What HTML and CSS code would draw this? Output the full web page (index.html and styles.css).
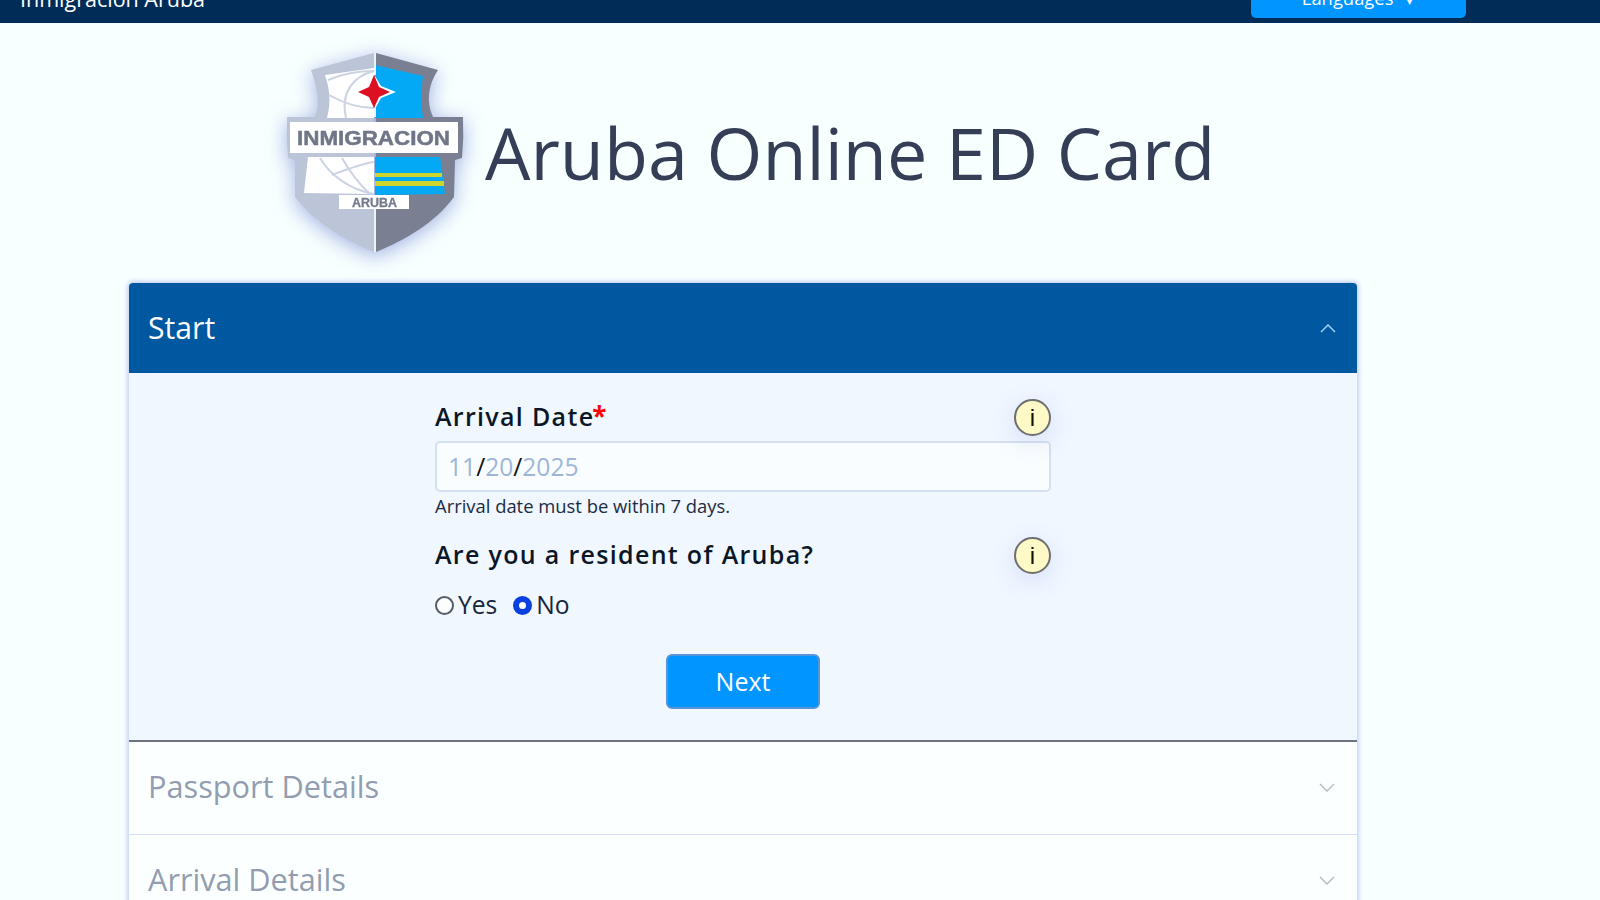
FILE: index.html
```html
<!DOCTYPE html>
<html lang="en">
<head>
    <meta charset="UTF-8">
    <meta name="viewport" content="width=device-width, initial-scale=1.0">
    <title>Aruba Online ED Card</title>
    <link rel="stylesheet" href="styles.css">
</head>
<body>
    <header class="topbar">
        <span class="brand">Inmigración Aruba</span>
        <button type="button" class="lang-btn">Languages <span class="lang-caret">▾</span></button>
    </header>

    <main class="page">
        <div class="title-row">
            <svg class="logo" viewBox="0 0 210 230" width="210" height="230">
                <path d="M104 13 L41 30 C48 50 50 65 45 77 L17 77 Q16 98 18 118 L25 120 L25 157 C45 183 75 200 104 212 Z" fill="#bcc5d8"/>
                <path d="M106 13 L168 30 C158 45 156 62 163 77 L193 77 Q194 98 192 118 L185 120 L184 157 C165 183 135 200 106 212 Z" fill="#7a8091"/>
                <path d="M55 35 L104 28 L104 78 L57 78 C61 62 60 50 55 35 Z" fill="#fff"/>
                <path d="M38 117 L104 117 L104 154 L34 153 Z" fill="#fff"/>
                <path d="M105 25 L153 36 C151 50 151 65 153 78 L105 78 Z" fill="#03a9f4"/>
                <path d="M105 117 L170 117 L175 154 L105 155 Z" fill="#03a9f4"/>
                <rect x="105" y="133" width="67" height="4" fill="#cdd52c"/>
                <rect x="105" y="141" width="69" height="5" fill="#cdd52c"/>
                <g fill="none" stroke="#ccd3e2" stroke-width="2">
                    <path d="M104 31 C84 36 70 52 76 78"/>
                    <path d="M59 55 C75 64 90 68 104 68"/>
                    <path d="M58 40 C72 34 88 31 104 31"/>
                    <path d="M50 118 C60 135 80 150 104 154"/>
                    <path d="M62 135 C75 130 90 124 104 122"/>
                    <path d="M72 118 C80 132 90 145 100 154"/>
                </g>
                <path d="M105 36 L111 46 L126 52 L111 58 L105 69 Z" fill="#fff"/>
                <path d="M104 35 L109 47 L120 52 L109 57 L104 68 L99 57 L88 52 L99 47 Z" fill="#dc0f23"/>
                <rect x="20" y="82" width="168" height="31" fill="#fff"/>
                <rect x="69" y="155" width="70" height="14" fill="#fff"/>
                <text class="logo-main" x="27" y="105" textLength="153" lengthAdjust="spacingAndGlyphs">INMIGRACION</text>
                <text class="logo-sub" x="82" y="167" textLength="45" lengthAdjust="spacingAndGlyphs">ARUBA</text>
                <rect x="104" y="13" width="2" height="22" fill="#eef1f6"/>
                <rect x="104" y="68" width="2" height="9" fill="#eef1f6"/>
                <rect x="104" y="169" width="2" height="43" fill="#eef1f6"/>
            </svg>
            <h1 class="page-title">Aruba Online ED Card</h1>
        </div>

        <section class="accordion">
            <div class="acc-head active">
                <span>Start</span>
                <svg class="chevron" viewBox="0 0 16 9" width="16" height="9"><path d="M1 8 L8 1 L15 8"/></svg>
            </div>
            <div class="acc-body">
                <form class="start-form" onsubmit="return false">
                    <div class="label-row">
                        <label class="field-label">Arrival Date<span class="req">*</span></label>
                        <span class="info">i</span>
                    </div>
                    <div class="date-input">
                        <span class="seg">11</span>/<span class="seg">20</span>/<span class="seg">2025</span>
                    </div>
                    <p class="help">Arrival date must be within 7 days.</p>

                    <div class="label-row second">
                        <label class="field-label">Are you a resident of Aruba?</label>
                        <span class="info">i</span>
                    </div>
                    <div class="radios">
                        <label class="radio"><input type="radio" name="resident">Yes</label>
                        <label class="radio"><input type="radio" name="resident" checked>No</label>
                    </div>
                    <div class="actions">
                        <button type="submit" class="next-btn">Next</button>
                    </div>
                </form>
            </div>
            <div class="acc-head closed">
                <span>Passport Details</span>
                <svg class="chevron" viewBox="0 0 16 9" width="16" height="9"><path d="M1 1 L8 8 L15 1"/></svg>
            </div>
            <div class="acc-head closed">
                <span>Arrival Details</span>
                <svg class="chevron" viewBox="0 0 16 9" width="16" height="9"><path d="M1 1 L8 8 L15 1"/></svg>
            </div>
        </section>
    </main>
</body>
</html>
```

FILE: styles.css
```css
html, body {
    margin: 0;
    height: 100%;
    overflow: hidden;
}
body {
    background-color: #f8ffff;
    font-family: "Open Sans", "Noto Sans", sans-serif;
    color: #0f2238;
}
.topbar {
    height: 23px;
    background-color: #002c57;
    display: flex;
    justify-content: space-between;
    align-items: flex-end;
    overflow: hidden;
    box-sizing: border-box;
    padding: 0 134px 5px 20px;
}
.brand {
    color: #fff;
    font-size: 21.5px;
    line-height: 27px;
    flex: none;
    margin-bottom: 6px;
}
.lang-btn {
    flex: none;
    width: 215px;
    height: 36px;
    background-color: #0095ff;
    color: #fff;
    border: none;
    border-radius: 5px;
    font-family: inherit;
    font-size: 18.4px;
    padding: 0 3px 6px 0;
}
.lang-caret {
    font-size: 10px;
    margin-left: 9px;
}
.page {
    width: 1228px;
    margin-left: 129px;
}
.title-row {
    display: flex;
    align-items: center;
    padding: 17px 0 13px 141px;
}
.logo {
    flex: none;
    filter: drop-shadow(0 4px 10px rgba(80, 100, 200, 0.5));
}
.logo-main {
    font-family: "Liberation Sans", Arial, sans-serif;
    font-weight: 700;
    font-size: 20px;
    fill: #6f7688;
    stroke: #6f7688;
    stroke-width: 0.5;
}
.logo-sub {
    font-family: "Liberation Sans", Arial, sans-serif;
    font-weight: 700;
    font-size: 12px;
    fill: #737a8c;
    stroke: #737a8c;
    stroke-width: 0.3;
}
.page-title {
    margin: 0 0 6px 5px;
    font-size: 71.9px;
    font-weight: 400;
    color: #343f57;
    white-space: nowrap;
}
.accordion {
    background-color: #fbffff;
    border-radius: 4px 4px 0 0;
    box-shadow: 0 0 4px 2px rgba(100, 130, 225, 0.35);
}
.acc-head {
    display: flex;
    align-items: center;
    justify-content: space-between;
    padding: 0 20px 0 19px;
    font-size: 30.7px;
}
.acc-head.active {
    height: 90px;
    box-sizing: border-box;
    padding-bottom: 2px;
    background-color: #0058a0;
    color: #fff;
    font-size: 30.2px;
    border-radius: 4px 4px 0 0;
}
.acc-head.active .chevron {
    stroke: #a8dcf5;
    margin-top: 2px;
}
.acc-head.closed {
    height: 93px;
    box-sizing: border-box;
    padding-bottom: 4px;
    color: #929db0;
    border-bottom: 1px solid #d5def5;
}
.acc-head.closed .chevron {
    margin-top: 2px;
    margin-right: 2px;
}
.chevron {
    fill: none;
    stroke: #b4b9c2;
    stroke-width: 1.4;
    margin-right: 1px;
}
.acc-body {
    background-color: #f1f7ff;
    border-bottom: 2px solid #6c7280;
    height: 369px;
    box-sizing: border-box;
    padding: 26px 0 0 306px;
}
.start-form {
    width: 616px;
}
.label-row {
    display: flex;
    justify-content: space-between;
    align-items: center;
    height: 37px;
    margin-bottom: 5px;
}
.label-row .field-label {
    margin-top: -3px;
}
.label-row.second {
    margin-top: 19px;
    margin-bottom: 14px;
}
.field-label {
    font-size: 25px;
    font-weight: 600;
    letter-spacing: 1.32px;
    color: #0b1726;
}
.req {
    color: #f00;
    font-size: 26px;
    font-weight: 700;
    line-height: 1;
    letter-spacing: 0;
    margin-left: -2px;
}
.info {
    width: 37px;
    height: 37px;
    box-sizing: border-box;
    border: 2px solid #6f6f6f;
    border-radius: 50%;
    background-color: #fdfac8;
    color: #111;
    font-family: "Liberation Sans", Arial, sans-serif;
    font-size: 24px;
    line-height: 33px;
    text-align: center;
    box-shadow: 0 6px 24px rgba(80, 110, 220, 0.18);
}
.date-input {
    height: 51px;
    box-sizing: border-box;
    border: 2px solid #d5e0f0;
    border-radius: 5px;
    background-color: #f9fdff;
    padding-left: 11px;
    font-size: 24.6px;
    line-height: 48px;
    color: #111;
}
.seg {
    color: #9db6d8;
}
.help {
    margin: 2px 0 0;
    font-size: 18.4px;
    line-height: 24px;
    color: #1a2b42;
}
.radios {
    display: flex;
    gap: 16px;
}
.radio {
    display: flex;
    align-items: center;
    font-size: 24.6px;
    line-height: 34px;
    color: #16263d;
}
.radio input {
    appearance: none;
    width: 19px;
    height: 19px;
    box-sizing: border-box;
    margin: 0 4px 0 0;
    border: 2px solid #555c66;
    border-radius: 50%;
    background-color: #fbfdff;
}
.radio input:checked {
    border: 6px solid #0a3fe0;
    background-color: #fff;
}
.actions {
    display: flex;
    justify-content: center;
    margin-top: 32px;
}
.next-btn {
    width: 154px;
    height: 55px;
    padding: 0 0 2px;
    background-color: #0095ff;
    color: #fff;
    border: 2px solid #5a94d8;
    border-radius: 6px;
    font-family: inherit;
    font-size: 25px;
}
```
